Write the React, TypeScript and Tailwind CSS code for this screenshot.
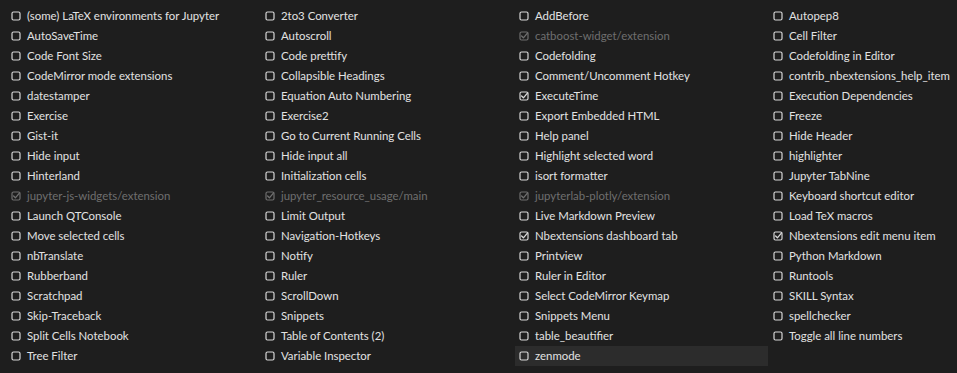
import React from "react";

type Item = { label: string; checked?: boolean; disabled?: boolean; hover?: boolean };

const cols: Item[][] = [
  [
    { label: "(some) LaTeX environments for Jupyter" },
    { label: "AutoSaveTime" },
    { label: "Code Font Size" },
    { label: "CodeMirror mode extensions" },
    { label: "datestamper" },
    { label: "Exercise" },
    { label: "Gist-it" },
    { label: "Hide input" },
    { label: "Hinterland" },
    { label: "jupyter-js-widgets/extension", checked: true, disabled: true },
    { label: "Launch QTConsole" },
    { label: "Move selected cells" },
    { label: "nbTranslate" },
    { label: "Rubberband" },
    { label: "Scratchpad" },
    { label: "Skip-Traceback" },
    { label: "Split Cells Notebook" },
    { label: "Tree Filter" },
  ],
  [
    { label: "2to3 Converter" },
    { label: "Autoscroll" },
    { label: "Code prettify" },
    { label: "Collapsible Headings" },
    { label: "Equation Auto Numbering" },
    { label: "Exercise2" },
    { label: "Go to Current Running Cells" },
    { label: "Hide input all" },
    { label: "Initialization cells" },
    { label: "jupyter_resource_usage/main", checked: true, disabled: true },
    { label: "Limit Output" },
    { label: "Navigation-Hotkeys" },
    { label: "Notify" },
    { label: "Ruler" },
    { label: "ScrollDown" },
    { label: "Snippets" },
    { label: "Table of Contents (2)" },
    { label: "Variable Inspector" },
  ],
  [
    { label: "AddBefore" },
    { label: "catboost-widget/extension", checked: true, disabled: true },
    { label: "Codefolding" },
    { label: "Comment/Uncomment Hotkey" },
    { label: "ExecuteTime", checked: true },
    { label: "Export Embedded HTML" },
    { label: "Help panel" },
    { label: "Highlight selected word" },
    { label: "isort formatter" },
    { label: "jupyterlab-plotly/extension", checked: true, disabled: true },
    { label: "Live Markdown Preview" },
    { label: "Nbextensions dashboard tab", checked: true },
    { label: "Printview" },
    { label: "Ruler in Editor" },
    { label: "Select CodeMirror Keymap" },
    { label: "Snippets Menu" },
    { label: "table_beautifier" },
    { label: "zenmode", hover: true },
  ],
  [
    { label: "Autopep8" },
    { label: "Cell Filter" },
    { label: "Codefolding in Editor" },
    { label: "contrib_nbextensions_help_item" },
    { label: "Execution Dependencies" },
    { label: "Freeze" },
    { label: "Hide Header" },
    { label: "highlighter" },
    { label: "Jupyter TabNine" },
    { label: "Keyboard shortcut editor" },
    { label: "Load TeX macros" },
    { label: "Nbextensions edit menu item", checked: true },
    { label: "Python Markdown" },
    { label: "Runtools" },
    { label: "SKILL Syntax" },
    { label: "spellchecker" },
    { label: "Toggle all line numbers" },
  ],
];

function Box({ checked, disabled }: { checked?: boolean; disabled?: boolean }) {
  const c = disabled ? "#6f6f6f" : "#d8d8d8";
  return (
    <svg width="10" height="10" viewBox="0 0 10 10" className="shrink-0">
      <rect x="1" y="1" width="8" height="8" rx="1.5" fill="none" stroke={c} strokeWidth="1.2" />
      {checked && (
        <path d="M2.6 5 L4.4 6.8 L8.6 1.8" fill="none" stroke={c} strokeWidth="1.3" strokeLinecap="round" strokeLinejoin="round" />
      )}
    </svg>
  );
}

function Row({ item }: { item: Item }) {
  return (
    <div
      className={`h-[20px] flex items-center gap-[6px] pl-[4px] ${item.hover ? "bg-[#2c2c2c]" : ""}`}
    >
      <Box checked={item.checked} disabled={item.disabled} />
      <span
        className={`text-[11.4px] whitespace-nowrap ${item.disabled ? "text-[#6f6f6f]" : "text-[#e2e2e2]"}`}
      >
        {item.label}
      </span>
    </div>
  );
}

export default function App() {
  return (
    <div
      className="w-[957px] h-[373px] bg-[#1e1e1e] pl-[7px] pt-[6px] overflow-hidden"
      style={{ fontFamily: "Lato, 'Open Sans', sans-serif" }}
    >
      <div className="grid grid-cols-[254px_254px_254px_254px]">
        {cols.map((col, i) => (
          <div key={i} className="flex flex-col pr-[1px]">
            {col.map((it) => (
              <Row key={it.label} item={it} />
            ))}
          </div>
        ))}
      </div>
    </div>
  );
}
